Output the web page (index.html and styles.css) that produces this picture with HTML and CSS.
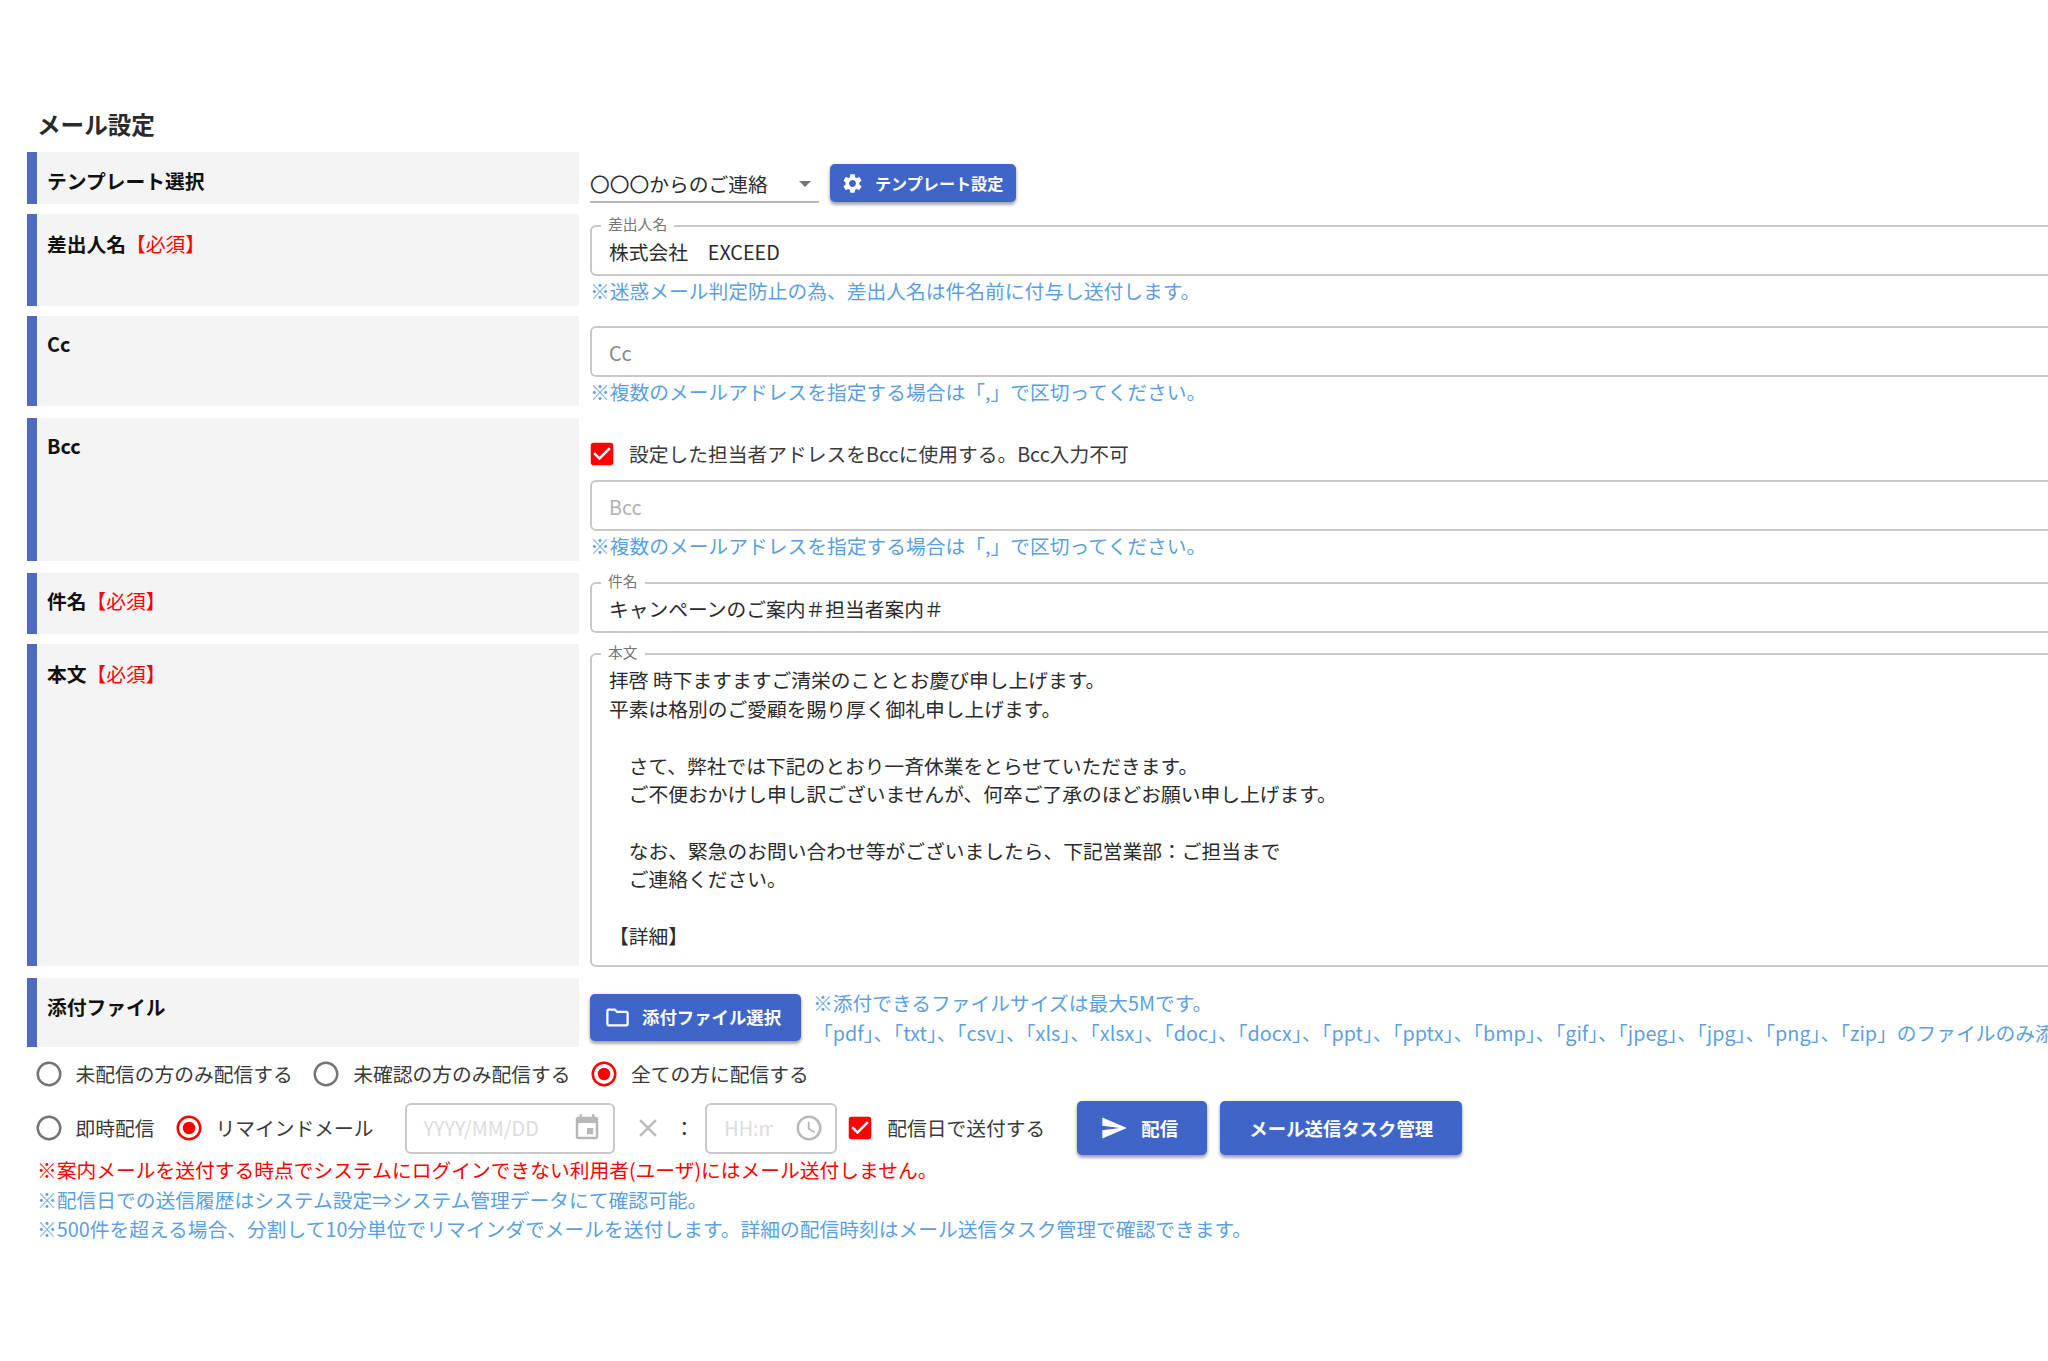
FILE: index.html
```html
<!DOCTYPE html>
<html lang="ja">
<head>
<meta charset="utf-8">
<title>メール設定</title>
<link rel="stylesheet" href="styles.css">
</head>
<body>
<main class="page">
  <h1 class="title">メール設定</h1>

  <section class="row row-template">
    <div class="label">テンプレート選択</div>
    <div class="control inline">
      <div class="select"><span>〇〇〇からのご連絡</span><i class="caret"></i></div>
      <button class="btn btn-small"><svg viewBox="0 0 24 24"><path d="M19.14 12.94c.04-.3.06-.61.06-.94 0-.32-.02-.64-.07-.94l2.03-1.58c.18-.14.23-.41.12-.61l-1.92-3.32c-.12-.22-.37-.29-.59-.22l-2.39.96c-.5-.38-1.03-.7-1.62-.94l-.36-2.54c-.04-.24-.24-.41-.48-.41h-3.84c-.24 0-.43.17-.47.41l-.36 2.54c-.59.24-1.13.57-1.62.94l-2.39-.96c-.22-.08-.47 0-.59.22L2.74 8.87c-.12.21-.08.47.12.61l2.03 1.58c-.05.3-.09.63-.09.94s.02.64.07.94l-2.03 1.58c-.18.14-.23.41-.12.61l1.92 3.32c.12.22.37.29.59.22l2.39-.96c.5.38 1.03.7 1.62.94l.36 2.54c.05.24.24.41.48.41h3.84c.24 0 .44-.17.47-.41l.36-2.54c.59-.24 1.13-.56 1.62-.94l2.39.96c.22.08.47 0 .59-.22l1.92-3.32c.12-.22.07-.47-.12-.61l-2.01-1.58zM12 15.6c-1.98 0-3.6-1.62-3.6-3.6s1.62-3.6 3.6-3.6 3.6 1.62 3.6 3.6-1.62 3.6-3.6 3.6z"/></svg><span>テンプレート設定</span></button>
    </div>
  </section>

  <section class="row row-sender">
    <div class="label">差出人名<em>【必須】</em></div>
    <div class="control">
      <div class="field"><span class="legend">差出人名</span>株式会社　EXCEED</div>
      <p class="note">※迷惑メール判定防止の為、差出人名は件名前に付与し送付します。</p>
    </div>
  </section>

  <section class="row row-cc">
    <div class="label">Cc</div>
    <div class="control">
      <div class="field placeholder">Cc</div>
      <p class="note">※複数のメールアドレスを指定する場合は「,」で区切ってください。</p>
    </div>
  </section>

  <section class="row row-bcc">
    <div class="label">Bcc</div>
    <div class="control">
      <div class="option bcc-check"><svg class="on" viewBox="0 0 24 24"><path d="M19 3H5c-1.11 0-2 .9-2 2v14c0 1.1.89 2 2 2h14c1.11 0 2-.9 2-2V5c0-1.1-.89-2-2-2zm-9 14l-5-5 1.41-1.41L10 14.17l7.59-7.59L19 8l-9 9z"/></svg><span>設定した担当者アドレスをBccに使用する。Bcc入力不可</span></div>
      <div class="field placeholder disabled">Bcc</div>
      <p class="note">※複数のメールアドレスを指定する場合は「,」で区切ってください。</p>
    </div>
  </section>

  <section class="row row-subject">
    <div class="label">件名<em>【必須】</em></div>
    <div class="control">
      <div class="field"><span class="legend">件名</span>キャンペーンのご案内＃担当者案内＃</div>
    </div>
  </section>

  <section class="row row-body">
    <div class="label">本文<em>【必須】</em></div>
    <div class="control">
      <div class="field textarea"><span class="legend">本文</span>
        <p class="tall">拝啓 時下ますますご清栄のこととお慶び申し上げます。</p>
        <p>平素は格別のご愛顧を賜り厚く御礼申し上げます。</p>
        <p class="para">　さて、弊社では下記のとおり一斉休業をとらせていただきます。</p>
        <p>　ご不便おかけし申し訳ございませんが、何卒ご了承のほどお願い申し上げます。</p>
        <p class="para">　なお、緊急のお問い合わせ等がございましたら、下記営業部：ご担当まで</p>
        <p>　ご連絡ください。</p>
        <p class="para">【詳細】</p>
      </div>
    </div>
  </section>

  <section class="row row-file">
    <div class="label">添付ファイル</div>
    <div class="control inline">
      <button class="btn btn-file"><svg viewBox="0 0 24 24"><path d="M9.17 6l2 2H20v10H4V6h5.17M10 4H4c-1.1 0-1.99.9-1.99 2L2 18c0 1.1.9 2 2 2h16c1.1 0 2-.9 2-2V8c0-1.1-.9-2-2-2h-8l-2-2z"/></svg><span>添付ファイル選択</span></button>
      <div class="note file-note">
        <p>※添付できるファイルサイズは最大5Mです。</p>
        <p>「pdf」、「txt」、「csv」、「xls」、「xlsx」、「doc」、「docx」、「ppt」、「pptx」、「bmp」、「gif」、「jpeg」、「jpg」、「png」、「zip」のファイルのみ添付できます。</p>
      </div>
    </div>
  </section>

  <div class="options targets">
    <div class="option"><svg viewBox="0 0 24 24"><circle class="ring" cx="12" cy="12" r="9"/></svg><span>未配信の方のみ配信する</span></div>
    <div class="option"><svg viewBox="0 0 24 24"><circle class="ring" cx="12" cy="12" r="9"/></svg><span>未確認の方のみ配信する</span></div>
    <div class="option"><svg class="on" viewBox="0 0 24 24"><circle class="ring" cx="12" cy="12" r="9"/><circle cx="12" cy="12" r="5"/></svg><span>全ての方に配信する</span></div>
  </div>

  <div class="options timing">
    <div class="option"><svg viewBox="0 0 24 24"><circle class="ring" cx="12" cy="12" r="9"/></svg><span>即時配信</span></div>
    <div class="option remind"><svg class="on" viewBox="0 0 24 24"><circle class="ring" cx="12" cy="12" r="9"/><circle cx="12" cy="12" r="5"/></svg><span>リマインドメール</span></div>
    <div class="picker date"><span>YYYY/MM/DD</span><svg viewBox="0 0 24 24"><path d="M17 12h-5v5h5v-5zM16 1v2H8V1H6v2H5c-1.11 0-1.99.9-1.99 2L3 19c0 1.1.89 2 2 2h14c1.1 0 2-.9 2-2V5c0-1.1-.9-2-2-2h-1V1h-2zm3 18H5V8h14v11z"/></svg></div>
    <svg class="clear" viewBox="0 0 24 24"><path d="M19 6.41L17.59 5 12 10.59 6.41 5 5 6.41 10.59 12 5 17.59 6.41 19 12 13.41 17.59 19 19 17.59 13.41 12z"/></svg>
    <span class="colon">：</span>
    <div class="picker time"><span>HH:mm</span><svg viewBox="0 0 24 24"><path d="M11.99 2C6.47 2 2 6.48 2 12s4.47 10 9.99 10C17.52 22 22 17.52 22 12S17.52 2 11.99 2zM12 20c-4.42 0-8-3.58-8-8s3.58-8 8-8 8 3.58 8 8-3.58 8-8 8zm.5-13H11v6l5.25 3.15.75-1.23-4.5-2.67z"/></svg></div>
    <div class="option day-check"><svg class="on" viewBox="0 0 24 24"><path d="M19 3H5c-1.11 0-2 .9-2 2v14c0 1.1.89 2 2 2h14c1.11 0 2-.9 2-2V5c0-1.1-.89-2-2-2zm-9 14l-5-5 1.41-1.41L10 14.17l7.59-7.59L19 8l-9 9z"/></svg><span>配信日で送付する</span></div>
    <button class="btn btn-large send"><svg viewBox="0 0 24 24"><path d="M2.01 21L23 12 2.01 3 2 10l15 2-15 2z"/></svg><span>配信</span></button>
    <button class="btn btn-large manage"><span>メール送信タスク管理</span></button>
  </div>

  <div class="note footer">
    <p class="warn">※案内メールを送付する時点でシステムにログインできない利用者(ユーザ)にはメール送付しません。</p>
    <p>※配信日での送信履歴はシステム設定⇒システム管理データにて確認可能。</p>
    <p>※500件を超える場合、分割して10分単位でリマインダでメールを送付します。詳細の配信時刻はメール送信タスク管理で確認できます。</p>
  </div>
</main>
</body>
</html>
```

FILE: styles.css
```css
* { box-sizing: border-box; }
html, body { margin: 0; height: 100%; overflow: hidden; background: #fff; }
body {
  font-family: "Noto Sans CJK JP", sans-serif;
  font-size: 19.75px;
  line-height: 30px;
  color: #2b2b2b;
  white-space: nowrap;
}
p { margin: 0; }
svg { display: block; flex: none; fill: currentColor; }

.page { width: 2140px; padding: 108px 0 0 27px; }
.title { margin: 0; padding-left: 10px; height: 44px; font-size: 23.6px; line-height: 33px; font-weight: 700; }

.row { display: flex; }
.label {
  flex: none;
  width: 552px;
  padding: 14px 0 0 10px;
  border-left: 10px solid #4e6bbf;
  background: #f4f4f4;
  color: #111;
  font-weight: 700;
}
.label em { font-style: normal; font-weight: 400; color: #f00; }
.control { flex: 1; padding-left: 11px; }
.inline { display: flex; align-items: flex-start; }

.row-template { height: 52px; margin-bottom: 10px; }
.row-sender { height: 92px; margin-bottom: 10px; }
.row-cc { height: 90px; margin-bottom: 12px; }
.row-bcc { height: 143px; margin-bottom: 12px; }
.row-subject { height: 61px; margin-bottom: 10px; }
.row-body { height: 322px; margin-bottom: 12px; }
.row-file { height: 69px; }

.row-sender .label, .row-body .label { padding-top: 15px; }
.row-cc .label, .row-bcc .label, .row-subject .label { padding-top: 13px; }
.row-sender .control { padding-top: 11px; }
.row-cc .control { padding-top: 10px; }
.row-subject .control, .row-body .control { padding-top: 9px; }

.select {
  display: flex;
  justify-content: space-between;
  align-items: center;
  width: 229px;
  height: 51px;
  padding: 14px 8px 0 0;
  border-bottom: 2px solid #b8b8b8;
}
.caret { border: 6.5px solid transparent; border-top-color: #757575; border-bottom: 0; }

.btn {
  display: flex;
  flex: none;
  align-items: center;
  border: 0;
  border-radius: 5px;
  background: #3f65c9;
  color: #fff;
  font: 700 18.4px/30px "Noto Sans CJK JP", sans-serif;
  box-shadow: 0 3px 3px rgba(0, 0, 0, .26), 0 1px 4px rgba(0, 0, 0, .2);
}
.btn span { margin-top: -1px; }
.btn-small { width: 186px; height: 38px; margin: 12px 0 0 11px; padding: 0 0 0 11px; gap: 11px; font-size: 16.1px; }
.btn-small svg { width: 23px; height: 23px; }
.btn-file { width: 211px; height: 47px; margin-top: 16px; padding: 0 0 0 14px; gap: 11px; font-size: 17.4px; }
.btn-file svg { width: 27px; height: 27px; }
.btn-large { height: 54px; }
.send { width: 130px; margin-left: 32px; padding: 0 0 0 23px; gap: 13px; }
.send svg { width: 28px; height: 28px; }
.manage { width: 242px; margin-left: 13px; padding: 0; justify-content: center; }

.field {
  position: relative;
  height: 51px;
  padding: 10px 17px 0;
  border: 2px solid #c8c8c8;
  border-radius: 6px;
}
.legend {
  position: absolute;
  top: -14px;
  left: 9px;
  padding: 0 7px;
  background: #fff;
  color: #757575;
  font-size: 14.8px;
  line-height: 22px;
}
.placeholder { color: #858585; }
.disabled { color: #b0b0b0; }
.textarea { height: 314px; line-height: 28.2px; padding-top: 10px; }
.textarea .tall { line-height: 29.5px; }
.textarea .para { padding-top: 28.8px; }
.note { color: #5b9fe0; }
.file-note { margin: 10px 0 0 12px; }

.option { display: flex; align-items: center; gap: 12px; color: #3a3a3a; }
.option svg { width: 30px; height: 30px; color: #757575; }
.option svg.on { color: #f00; }
.ring { fill: none; stroke: currentColor; stroke-width: 2; }
.bcc-check { height: 62px; margin-left: -3px; padding-top: 10px; }

.options { display: flex; align-items: center; padding-left: 6.5px; }
.targets { height: 53px; gap: 18.5px; }
.timing { height: 56px; }
.remind { margin-left: 19px; }
.picker {
  display: flex;
  align-items: center;
  justify-content: space-between;
  height: 51px;
  border: 2px solid #c8c8c8;
  border-radius: 6px;
  padding: 0 11px 0 17px;
  color: #dcdcdc;
}
.picker svg { width: 30px; height: 30px; color: #b8b8b8; }
.date { width: 210px; margin-left: 31px; }
.time { width: 132px; margin-left: 11px; }
.time span { width: 49px; overflow: hidden; }
.clear { width: 30px; height: 30px; margin-left: 18px; color: #bdbdbd; }
.colon { margin-left: 12px; }
.day-check { margin-left: 8px; }
.footer { margin-top: -1px; padding: 0 0 0 10px; line-height: 29.6px; }
.warn { color: #f00; }
```
